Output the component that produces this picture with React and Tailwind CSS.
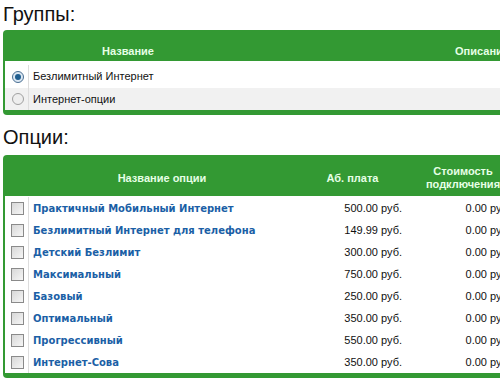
import React from "react";

const options = [
  ["Практичный Мобильный Интернет", "500.00"],
  ["Безлимитный Интернет для телефона", "149.99"],
  ["Детский Безлимит", "300.00"],
  ["Максимальный", "750.00"],
  ["Базовый", "250.00"],
  ["Оптимальный", "350.00"],
  ["Прогрессивный", "550.00"],
  ["Интернет-Сова", "350.00"],
];

function Radio({ checked }) {
  return (
    <span
      className={`block w-[12px] h-[12px] rounded-full border ${
        checked ? "border-[#4a6f93] bg-[#dbe7f2]" : "border-[#a0a0a0] bg-[#eeeeee]"
      } flex items-center justify-center`}
    >
      {checked && <span className="block w-[6px] h-[6px] rounded-full bg-[#1f5e8f]" />}
    </span>
  );
}

function Checkbox() {
  return (
    <span className="block w-[13px] h-[13px] border border-[#8a8a8a] bg-gradient-to-br from-[#d8d8d8] to-[#f6f6f6]" />
  );
}

export default function App() {
  return (
    <div
      className="w-[500px] h-[386px] overflow-hidden bg-white text-[11px] text-[#111]"
      style={{ fontFamily: '"Liberation Sans", Arial, sans-serif' }}
    >
      <div className="pl-[3px]">
        <h2 className="text-[20px] leading-[24px] pt-[2px] text-[#111]">Группы:</h2>
        <div className="mt-[4px] w-[760px] rounded-[4px] bg-[#339933] pl-[2px] pb-[5px]">
          <div className="flex h-[31px] text-[#e6ffe6] font-bold items-start pt-[13px]">
            <div className="w-[24px]" />
            <div className="w-[198px] text-center">Название</div>
            <div className="w-[510px] text-center">Описание</div>
          </div>
          <div className="bg-white">
            <div className="flex h-[27px] items-center pt-[4px] bg-white">
              <div className="w-[24px] h-full flex items-center justify-center border-r border-[#dddddd] pl-[2px]">
                <Radio checked />
              </div>
              <div className="pl-[4px]">Безлимитный Интернет</div>
            </div>
            <div className="flex h-[22px] items-center bg-[#f1f1f1]">
              <div className="w-[24px] h-full flex items-center justify-center border-r border-[#dddddd] pl-[2px]">
                <Radio />
              </div>
              <div className="pl-[4px]">Интернет-опции</div>
            </div>
          </div>
        </div>

        <h2 className="text-[20px] leading-[24px] mt-[10px] text-[#111]">Опции:</h2>
        <div className="mt-[6px] w-[760px] rounded-[4px] bg-[#339933] pl-[2px] pb-[5px]">
          <div className="flex h-[41px] text-[#e6ffe6] font-bold items-start pt-[10px] leading-[13px]">
            <div className="w-[24px]" />
            <div className="w-[266px] text-center pt-[7px]">Название опции</div>
            <div className="w-[115px] text-center pt-[7px]">Аб. плата</div>
            <div className="w-[106px] text-center">
              Стоимость
              <br />
              подключения
            </div>
          </div>
          <div className="bg-white pt-[1px]">
            {options.map(([name, price]) => (
              <div key={name} className="flex h-[22px] items-center">
                <div className="w-[24px] h-full flex items-center justify-center border-r border-[#dddddd] pl-[2px]">
                  <Checkbox />
                </div>
                <div
                  className="w-[266px] pl-[4px] font-bold text-[#1b5fa6] text-[10px] whitespace-nowrap"
                  style={{ fontFamily: '"DejaVu Sans", Verdana, sans-serif' }}
                >
                  {name}
                </div>
                <div className="w-[115px] text-right pr-[8px]">{price} руб.</div>
                <div className="w-[106px] text-right pr-[5px] whitespace-nowrap">0.00 руб.</div>
              </div>
            ))}
          </div>
        </div>
      </div>
    </div>
  );
}
